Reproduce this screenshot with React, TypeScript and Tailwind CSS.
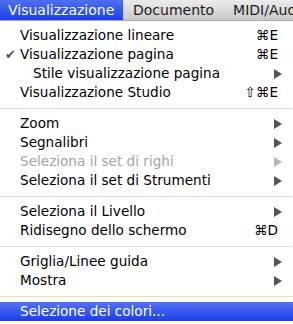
import React from 'react';

type Item =
  | { kind: 'sep' }
  | {
      kind: 'item';
      label: string;
      shortcut?: string;
      submenu?: boolean;
      checked?: boolean;
      disabled?: boolean;
      indent?: boolean;
      active?: boolean;
    };

const items: Item[] = [
  { kind: 'item', label: 'Visualizzazione lineare', shortcut: '⌘E' },
  { kind: 'item', label: 'Visualizzazione pagina', shortcut: '⌘E', checked: true },
  { kind: 'item', label: 'Stile visualizzazione pagina', submenu: true, indent: true },
  { kind: 'item', label: 'Visualizzazione Studio', shortcut: '⇧⌘E' },
  { kind: 'sep' },
  { kind: 'item', label: 'Zoom', submenu: true },
  { kind: 'item', label: 'Segnalibri', submenu: true },
  { kind: 'item', label: 'Seleziona il set di righi', submenu: true, disabled: true },
  { kind: 'item', label: 'Seleziona il set di Strumenti', submenu: true },
  { kind: 'sep' },
  { kind: 'item', label: 'Seleziona il Livello', submenu: true },
  { kind: 'item', label: 'Ridisegno dello schermo', shortcut: '⌘D' },
  { kind: 'sep' },
  { kind: 'item', label: 'Griglia/Linee guida', submenu: true },
  { kind: 'item', label: 'Mostra', submenu: true },
  { kind: 'sep' },
  { kind: 'item', label: 'Selezione dei colori...', active: true },
];

function Arrow({ color }: { color: string }) {
  return (
    <svg width="8" height="10" viewBox="0 0 8 10" className="block">
      <polygon points="0,0 8,5 0,10" fill={color} />
    </svg>
  );
}

export default function App() {
  return (
    <div
      className="w-[293px] h-[324px] overflow-hidden bg-white text-black"
      style={{ fontFamily: '"DejaVu Sans", "Noto Sans", sans-serif' }}
    >
      {/* menu bar */}
      <div className="flex h-[21px] items-center overflow-hidden border-b border-[#a9a9a9] bg-gradient-to-b from-[#ececec] to-[#c9c9c9] text-[14px] leading-none">
        <div className="flex h-[20px] w-[123px] shrink-0 items-center bg-gradient-to-b from-[#4f6ef3] to-[#1c3ce9] pl-[8px] text-white">
          Visualizzazione
        </div>
        <div className="shrink-0 pl-[10px] text-[#1a1a1a]">Documento</div>
        <div className="shrink-0 pl-[19px] whitespace-nowrap text-[#1a1a1a]">MIDI/Aud</div>
      </div>

      {/* dropdown */}
      <div className="pt-[5px] text-[13.6px] leading-none">
        {items.map((it, i) => {
          if (it.kind === 'sep') {
            return (
              <div key={i} className="flex h-[12px] items-center">
                <div className="h-px w-[292px] bg-[#dcdcdc]" />
              </div>
            );
          }
          const textColor = it.active ? 'text-white' : it.disabled ? 'text-[#a5a5a5]' : 'text-black';
          return (
            <div
              key={i}
              className={`flex h-[19px] items-center pr-[11px] ${
                it.active ? 'bg-gradient-to-b from-[#5472f4] to-[#1b3be9]' : ''
              } ${textColor}`}
            >
              <div className="flex w-[20px] justify-center pl-[1px] text-[13px] text-[#555]">
                {it.checked ? '✔' : ''}
              </div>
              <div className={`flex-1 whitespace-nowrap ${it.indent ? 'pl-[13px]' : ''}`}>{it.label}</div>
              {it.shortcut && <div className="pr-[4px] whitespace-nowrap">{it.shortcut}</div>}
              {it.submenu && <Arrow color={it.disabled ? '#b5b5b5' : '#555555'} />}
            </div>
          );
        })}
      </div>
    </div>
  );
}
